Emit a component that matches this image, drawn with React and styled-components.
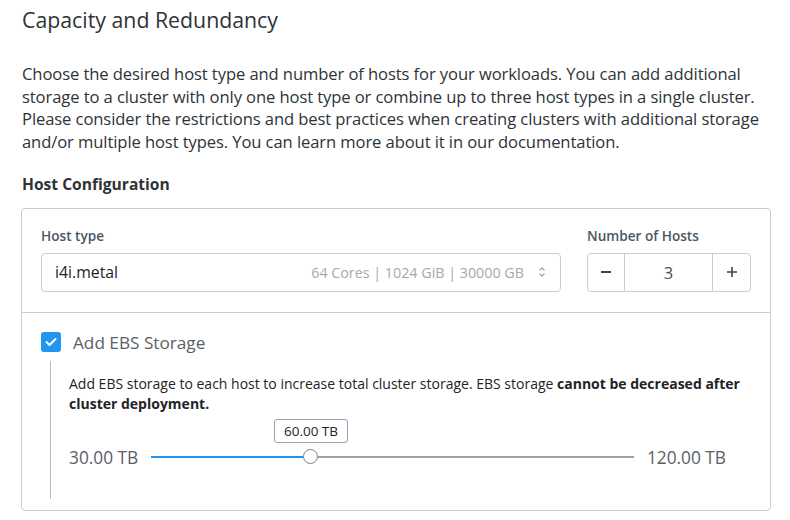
import styled, { createGlobalStyle } from "styled-components";

const GlobalStyle = createGlobalStyle`
  body {
    margin: 0;
    background: #fff;
    font-family: "Open Sans", Lato, sans-serif;
    color: #2e3338;
  }
`;

const Page = styled.div`
  width: 790px;
  padding: 6px 22px 0 22px;
  box-sizing: border-box;
`;

const Title = styled.h1`
  margin: 0;
  font-size: 21.3px;
  font-weight: 400;
  color: #2e3338;
  line-height: 28px;
`;

const Intro = styled.p`
  margin: 29px 0 0;
  font-size: 16.6px;
  line-height: 22.7px;
  color: #2e3338;
  letter-spacing: -0.1px;
  white-space: nowrap;
`;

const SectionTitle = styled.h2`
  margin: 20px 0 0;
  font-size: 15.6px;
  font-weight: 700;
  line-height: 20px;
  color: #2e3338;
`;

const Card = styled.div`
  margin-top: 14px;
  width: 750px;
  margin-left: -1px;
  border: 1px solid #c9ced4;
  border-radius: 4px;
  box-sizing: border-box;
`;

const TopRow = styled.div`
  display: flex;
  gap: 26px;
  padding: 18px 19px 20px 19px;
  border-bottom: 1px solid #c9ced4;
`;

const Field = styled.div`
  display: flex;
  flex-direction: column;
  gap: 8px;
  width: ${(p) => p.$width}px;
`;

const Label = styled.label`
  font-size: 13.6px;
  font-weight: 600;
  color: #4c5763;
  line-height: 18px;
`;

const Select = styled.div`
  height: 39px;
  border: 1px solid #c9ced4;
  border-radius: 4px;
  box-sizing: border-box;
  display: flex;
  align-items: center;
  padding: 0 14px 0 13px;
`;

const SelectValue = styled.span`
  flex: 1;
  font-size: 15.8px;
  color: #1f2327;
`;

const SelectMeta = styled.span`
  font-size: 14.3px;
  color: #a3a9b0;
  margin-right: 14px;
`;

const Stepper = styled.div`
  height: 39px;
  display: grid;
  grid-template-columns: 37px 1fr 38px;
  border: 1px solid #c9ced4;
  border-radius: 4px;
  box-sizing: border-box;
`;

const StepButton = styled.button`
  border: none;
  background: transparent;
  display: flex;
  align-items: center;
  justify-content: center;
  color: #3d444b;
  padding: 0;
  border-left: ${(p) => (p.$side === "right" ? "1px solid #c9ced4" : "none")};
  border-right: ${(p) => (p.$side === "left" ? "1px solid #c9ced4" : "none")};
`;

const StepValue = styled.div`
  display: flex;
  align-items: center;
  justify-content: center;
  font-size: 16.5px;
  color: #3d5266;
`;

const Storage = styled.div`
  padding: 18px 19px 11px 19px;
`;

const CheckRow = styled.div`
  display: flex;
  align-items: center;
  gap: 12px;
`;

const Checkbox = styled.span`
  width: 20px;
  height: 20px;
  border-radius: 3px;
  background: #2196f0;
  display: flex;
  align-items: center;
  justify-content: center;
`;

const CheckLabel = styled.span`
  font-size: 17.2px;
  color: #5a6068;
`;

const StorageBody = styled.div`
  margin: 7px 0 0 9px;
  border-left: 1px solid #b5bbc2;
  padding: 13px 25px 30px 18px;
`;

const Note = styled.p`
  margin: 0;
  font-size: 14px;
  line-height: 20px;
  color: #1f2327;
  white-space: nowrap;

  b {
    font-weight: 700;
  }
`;

const SliderRow = styled.div`
  display: flex;
  align-items: center;
  gap: 13px;
  margin-top: 32px;
`;

const RangeLabel = styled.span`
  font-size: 17.3px;
  color: #5a6068;
`;

const Track = styled.div`
  position: relative;
  flex: 1;
  height: 2px;
  background: #9aa1a8;
`;

const Fill = styled.div`
  position: absolute;
  left: 0;
  top: 0;
  height: 2px;
  background: #1e96ef;
`;

const Thumb = styled.div`
  position: absolute;
  top: -7px;
  width: 15px;
  height: 15px;
  margin-left: -8px;
  box-sizing: border-box;
  border-radius: 50%;
  border: 1.5px solid #7b838b;
  background: #fff;
`;

const Bubble = styled.div`
  position: absolute;
  bottom: 15px;
  transform: translateX(-50%);
  border: 1px solid #9aa1a8;
  border-radius: 3px;
  padding: 3px 9px;
  font-size: 13.5px;
  line-height: 16px;
  color: #1f2327;
  background: #fff;
  white-space: nowrap;
`;

function SortIcon() {
  return (
    <svg width="8" height="12" viewBox="0 0 8 12">
      <path d="M1.5 4.5 L4 2 L6.5 4.5" fill="none" stroke="#a3a9b0" strokeWidth="1.3" />
      <path d="M1.5 7.5 L4 10 L6.5 7.5" fill="none" stroke="#a3a9b0" strokeWidth="1.3" />
    </svg>
  );
}

function App() {
  const pct = 33.1;
  return (
    <Page>
      <GlobalStyle />
      <Title>Capacity and Redundancy</Title>
      <Intro>
        Choose the desired host type and number of hosts for your workloads. You can add additional
        <br />
        storage to a cluster with only one host type or combine up to three host types in a single cluster.
        <br />
        Please consider the restrictions and best practices when creating clusters with additional storage
        <br />
        and/or multiple host types. You can learn more about it in our documentation.
      </Intro>
      <SectionTitle>Host Configuration</SectionTitle>
      <Card>
        <TopRow>
          <Field $width={520}>
            <Label>Host type</Label>
            <Select>
              <SelectValue>i4i.metal</SelectValue>
              <SelectMeta>64 Cores | 1024 GiB | 30000 GB</SelectMeta>
              <SortIcon />
            </Select>
          </Field>
          <Field $width={164}>
            <Label>Number of Hosts</Label>
            <Stepper>
              <StepButton $side="left">
                <svg width="12" height="12" viewBox="0 0 12 12">
                  <path d="M1 6 H11" stroke="#3d444b" strokeWidth="2" />
                </svg>
              </StepButton>
              <StepValue>3</StepValue>
              <StepButton $side="right">
                <svg width="12" height="12" viewBox="0 0 12 12">
                  <path d="M1 6 H11 M6 1 V11" stroke="#3d444b" strokeWidth="1.6" />
                </svg>
              </StepButton>
            </Stepper>
          </Field>
        </TopRow>
        <Storage>
          <CheckRow>
            <Checkbox>
              <svg width="12" height="10" viewBox="0 0 12 10">
                <path d="M1.5 5 L4.5 8 L10.5 2" fill="none" stroke="#fff" strokeWidth="2" strokeLinecap="round" strokeLinejoin="round" />
              </svg>
            </Checkbox>
            <CheckLabel>Add EBS Storage</CheckLabel>
          </CheckRow>
          <StorageBody>
            <Note>
              Add EBS storage to each host to increase total cluster storage. EBS storage <b>cannot be decreased after</b>
              <br />
              <b>cluster deployment.</b>
            </Note>
            <SliderRow>
              <RangeLabel>30.00 TB</RangeLabel>
              <Track>
                <Fill style={{ width: `${pct}%` }} />
                <Thumb style={{ left: `${pct}%` }} />
                <Bubble style={{ left: `${pct}%` }}>60.00 TB</Bubble>
              </Track>
              <RangeLabel>120.00 TB</RangeLabel>
            </SliderRow>
          </StorageBody>
        </Storage>
      </Card>
    </Page>
  );
}

export default App;
